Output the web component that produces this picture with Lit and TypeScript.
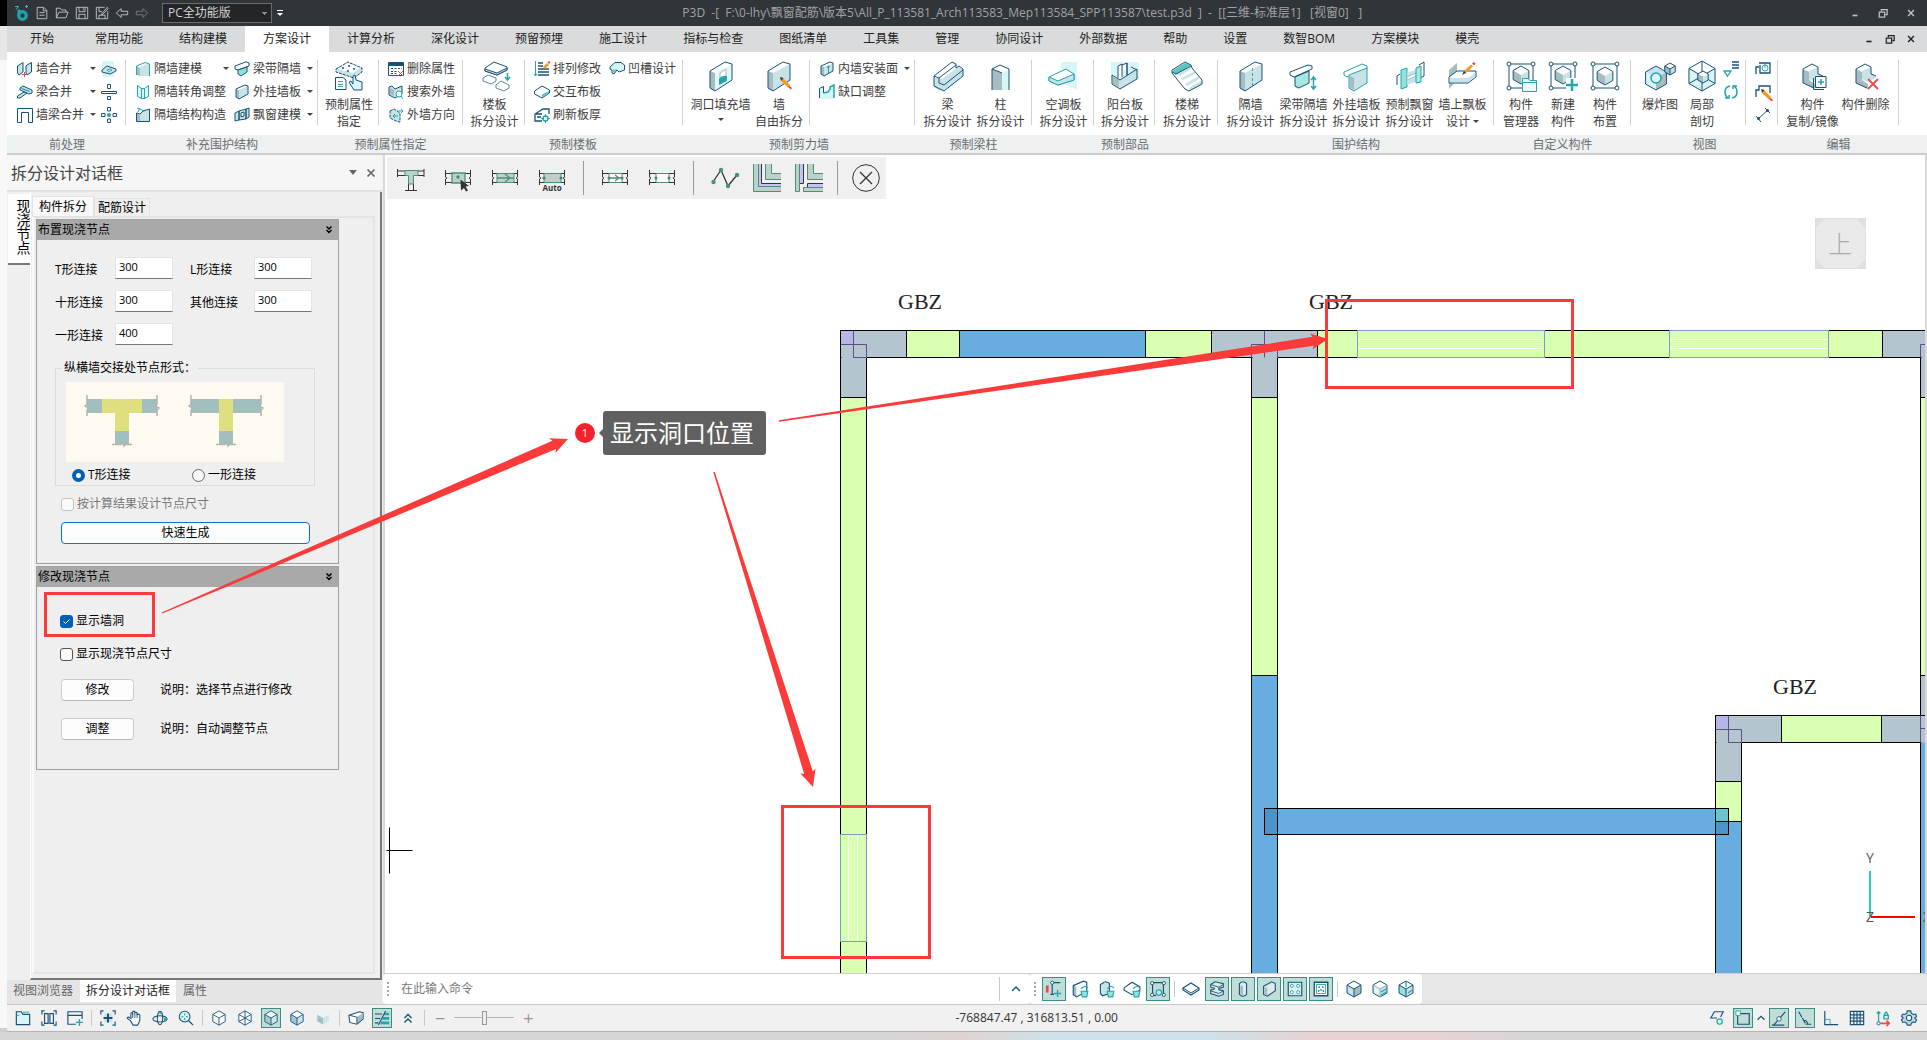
import { LitElement, html, svg, css, nothing } from "lit";
import { customElement, property, state } from "lit/decorators.js";
import { classMap } from "lit/directives/class-map.js";
import { styleMap } from "lit/directives/style-map.js";

const NAVY = "#1a5276";
const TEAL = "#26a5ad";
const PALE = "#d8f5f7";
const LIGHT = "#c8e3e8";
const GREY = "#a6bcc2";

/* ---------- drawing helpers ---------- */

const cube = (cx: number, cy: number, r: number, top = "#fff", left = GREY, right = LIGHT, line = NAVY) => {
  const w = r * 0.87;
  const h = r / 2;
  return svg`
    <path fill=${top} d="M${cx} ${cy - r}L${cx + w} ${cy - h}L${cx} ${cy}L${cx - w} ${cy - h}Z"/>
    <path fill=${left} d="M${cx - w} ${cy - h}L${cx} ${cy}V${cy + r}L${cx - w} ${cy + h}Z"/>
    <path fill=${right} d="M${cx + w} ${cy - h}L${cx} ${cy}V${cy + r}L${cx + w} ${cy + h}Z"/>
    <path fill="none" stroke=${line} d="M${cx} ${cy - r}L${cx + w} ${cy - h}V${cy + h}L${cx} ${cy + r}L${cx - w} ${cy + h}V${cy - h}Z"/>`;
};
const cubeLines = (cx: number, cy: number, r: number, line = NAVY) => {
  const w = r * 0.87;
  const h = r / 2;
  return svg`<path fill="none" stroke=${line} d="M${cx - w} ${cy - h}L${cx} ${cy}L${cx + w} ${cy - h}M${cx} ${cy}V${cy + r}"/>`;
};
const wallPanel = (front = LIGHT, line = NAVY) => svg`
  <path fill="#fff" d="M5 11L20 2L27 4L10 13Z"/>
  <path fill=${front} d="M10 13L27 4V20L10 31Z"/>
  <path fill=${GREY} d="M5 11L10 13V31L5 28Z"/>
  <path fill="none" stroke=${line} d="M5 11L20 2L27 4V20L10 31L5 28Z"/>`;
const miniWall = (front = LIGHT, line = NAVY) => svg`
  <path fill=${GREY} d="M2 5L5 6V15L2 13Z"/><path fill=${front} d="M5 6L14 2V10L5 15Z"/>
  <path fill="none" stroke=${line} d="M2 5L11 1L14 2V10L5 15L2 13Z"/>`;
const pencil = (x: number, y: number) => svg`
  <g transform="translate(${x} ${y})"><path fill="#f59b1c" d="M3 1L10 8L8 10.500L1 4Z"/><path fill="#3a3a3a" d="M0 0L3.500 1L1 4Z"/><path fill="#e8484a" d="M9 8.500L12 11L11 12.500L8 10Z"/></g>`;
const pencilUp = (x: number, y: number) => svg`
  <g transform="translate(${x} ${y})"><path fill="#f59b1c" d="M2 8L9 1.500L11 3.500L4 10Z"/><path fill="#3a3a3a" d="M0 12L2 8L4 10Z"/><path fill="#e8484a" d="M10 0.500L12 -1L13.500 0.500L12 2.500Z"/></g>`;
const nodeFrame = svg`
  <path fill="none" stroke=${NAVY} d="M4 5V27M28 5V27M4 4H28M4 28H28"/>
  <g fill="#fff" stroke=${NAVY}><circle cx="4" cy="4" r="2"/><circle cx="28" cy="4" r="2"/><circle cx="4" cy="28" r="2"/><circle cx="28" cy="28" r="2"/></g>`;
const bucket = svg`<path fill="#8fe3dc" stroke=${TEAL} d="M9 10H15L14 15H10Z"/><path fill="none" stroke=${TEAL} d="M9 8Q12 4 15 7"/>`;
const wallEnds = svg`<path fill="none" stroke="#333" d="M1.500 6V13L3 14L1.500 15V21M1.500 9.500H27M1.500 18.500H27M26.500 6V13L25 14L26.500 15V21"/>`;

/* ---------- icons: [view box size, artwork] ---------- */

const ICONS: Record<string, [number, unknown]> = {
  logo: [16, svg`<circle cx="8.500" cy="10.500" r="3.800" fill="none" stroke="#1fa3b3" stroke-width="3.200"/><path stroke="#27c0cf" fill="none" d="M1 1.500H4.500L2 4.500M12.500 0V3M11 1.500H14"/><path fill="#1fa3b3" d="M3.500 4.500H6.500V9L3.500 10Z"/>`],
  file: [16, svg`<path fill="none" stroke="#c6cacc" d="M2.500 1.500H10L13.500 5V14.500H2.500ZM9.500 1.500V5.500H13.500M5 7.500H11M5 10.500H11"/>`],
  open: [16, svg`<path fill="none" stroke="#c6cacc" d="M1.500 13.500V2.500H6L7.500 4.500H12.500V7M1.500 13.500L4.500 7H15L12.500 13.500Z"/>`],
  save: [16, svg`<path fill="none" stroke="#c6cacc" d="M1.500 1.500H14.500V14.500H1.500ZM4.500 1.500V6.500H11.500V1.500M4.500 14.500V9.500H11.500V14.500M9.500 3V5"/>`],
  saveas: [16, svg`<path fill="none" stroke="#c6cacc" d="M11 1.500H1.500V14.500H14.500V6M4.500 1.500V6.500H8M4.500 14.500V10.500H11.500V14.500M14 1.500L8 8.500L7.500 10L9 9.500L15 3Z"/>`],
  undo: [16, svg`<path fill="none" stroke="#c6cacc" d="M1.500 8L7 3V6H14.500V10H7V13Z"/>`],
  redo: [16, svg`<path fill="none" stroke="#7b8185" d="M14.500 8L9 3V6H1.500V10H9V13Z"/>`],
  more: [8, svg`<path d="M1 1H7V2H1Z" fill="#fff"/><path d="M1 4H7L4 7Z" fill="#fff"/>`],
  min: [12, svg`<path d="M3 9H9" stroke="currentColor" stroke-width="2"/>`],
  restore: [12, svg`<path fill="none" stroke="currentColor" stroke-width="1.500" d="M4 4V2H11V8H9M1.500 5H8V11H1.500Z"/>`],
  close: [12, svg`<path stroke="currentColor" stroke-width="1.700" d="M2.500 2.500L9.500 9.500M9.500 2.500L2.500 9.500"/>`],

  wallMerge: [16, svg`<path fill=${LIGHT} stroke=${NAVY} d="M2 4L6 1.500V11L2 14L.5 12V5ZM10 4L14.500 1.500V11L10 14L9 12V5Z"/><path stroke="#e8484a" d="M7.500 11V16M5 13.500H10"/>`],
  beamMerge: [16, svg`<path fill=${LIGHT} stroke=${NAVY} d="M3 4L6 2L15 6V9L12 10L3 6ZM7 8L10 9L3 14H.5V12Z"/><path fill=${TEAL} d="M5 4L13 7L12 8L4 5Z"/>`],
  wallBeam: [16, svg`<path fill="none" stroke=${NAVY} d="M.5 1.500H15.500V15.500H11.500V5.500H4.500V15.500H.5Z"/>`],
  split1: [16, svg`<path fill=${PALE} d="M1 0H13V16H1Z"/><path fill=${LIGHT} stroke=${NAVY} d="M1 9L6 5L15 8V10L9 13L1 11Z"/><path fill="#fff" stroke=${TEAL} d="M6 9L9 8L11 9L8 10.500Z"/>`],
  split2: [16, svg`<path fill="#fff" stroke=${NAVY} d="M.5 7.500H15.500V9.500H.5ZM6.500 .5H9.500V4.500H6.500ZM6.500 12.500H9.500V15.500H6.500Z"/>`],
  split3: [16, svg`<path fill="#fff" stroke=${NAVY} d="M6.500 .5H9.500V4H6.500ZM6.500 12H9.500V15.500H6.500ZM.5 6.500H4V9.500H.5ZM12 6.500H15.500V9.500H12Z"/><circle cx="8" cy="8" r="2" fill=${TEAL}/>`],
  part1: [16, svg`<path fill=${GREY} d="M2 5L5 7V15L2 14Z"/><path fill=${LIGHT} d="M5 6L14 2V15H5Z"/><path fill="none" stroke=${TEAL} d="M1.500 14V5L10 1.500L14.500 3V15"/>`],
  part2: [16, svg`<path fill=${PALE} stroke=${TEAL} d="M2.500 1.500L6.500 4.500V14.500L2.500 12.500ZM6.500 4.500H9.500V14.500H6.500M9.500 4.500L13.500 1.500V12.500L9.500 14.500Z"/>`],
  part3: [16, svg`<path fill=${LIGHT} stroke=${NAVY} d="M1.500 14.500V6L5 7L8 4L14.500 2V14.500Z"/><path stroke=${TEAL} fill="none" d="M2 1L9 4M5 1L3 5"/><path fill=${GREY} d="M2 7L5 8V14H2Z"/>`],
  part4: [16, svg`<path fill="#fff" stroke=${NAVY} d="M1 5L12 .8L15 2V5L4 9L1 8Z"/><path fill="#8fe3dc" stroke=${NAVY} d="M4 9L13 6V11L7 15L4 13Z"/>`],
  part5: [16, miniWall()],
  part6: [16, svg`<path fill=${LIGHT} stroke=${NAVY} d="M1 6L5 4V13L1 14ZM5 4L12 2V12L5 13ZM12 2L15 1V10L12 12Z"/><path fill="#fff" stroke=${NAVY} d="M7 6L10 5V9L7 10Z"/>`],
  attr: [32, svg`<path fill=${LIGHT} stroke=${NAVY} stroke-dasharray="3 1" d="M3 9L15 2L29 8V12L21 18L3 12Z"/><path fill="#fff" d="M5 9L15 3L27 8L20 13Z"/><g fill=${NAVY}><circle cx="10" cy="8" r="1"/><circle cx="16" cy="6" r="1"/><circle cx="15" cy="11" r="1"/><circle cx="21" cy="9" r="1"/></g><path fill="#fff" stroke=${NAVY} d="M2.500 17.500H10L13 20V29.500H2.500Z"/><path stroke=${TEAL} d="M5 21.500H10M5 24.500H10M5 26.500H10"/><path fill=${PALE} stroke=${NAVY} d="M19 27L16 22L18 21L20 24V16L22 15L23 20L29 22V30H21Z"/>`],
  attrDel: [16, svg`<path fill="#fff" stroke=${NAVY} d="M.5 1.500H15.500V14.500H.5Z"/><path fill=${NAVY} d="M1 2H15V5H1Z"/><path stroke=${NAVY} stroke-dasharray="2 1.500" d="M3 7.500H14M3 10.500H9M3 12.500H9"/><path stroke="#e8484a" d="M10 10L15 15M15 10L10 15"/>`],
  attrFind: [16, svg`<path fill=${LIGHT} stroke=${NAVY} d="M1 3L4 2L7 5L14 2V10L7 14L1 11Z"/><path fill=${GREY} d="M2 4L6 6V12L2 10Z"/><circle cx="11" cy="10" r="3" fill="#fff" stroke=${TEAL}/><path stroke=${TEAL} d="M13 12L15 15"/>`],
  attrDir: [16, svg`<path fill=${LIGHT} stroke=${NAVY} stroke-dasharray="3 1" d="M2 4L6 2L12 6V15L8 14L2 11Z"/><path fill="none" stroke=${TEAL} d="M9 4H15M13 2L15 4L13 6M10 9H5M7 7L5 9L7 11"/>`],
  slab: [32, svg`<path fill="#fff" stroke=${NAVY} d="M6 8L15 2L28 7V10L18 15L6 11Z"/><path fill=${LIGHT} stroke=${NAVY} d="M6 9L18 13L28 8V10L18 15L6 11Z"/><path fill="#fff" stroke=${NAVY} stroke-opacity=".7" d="M4 18L9 15L17 18V21L12 24L4 21ZM17 25L22 21L30 25V28L25 31L17 28Z"/><path stroke=${TEAL} fill="none" stroke-width="1.500" d="M28.500 13V20M26 17L28.500 20L31 17"/>`],
  arrange: [16, svg`<path stroke=${NAVY} stroke-width="1.500" d="M4 2H9M4 5H9M4 8H15M4 11H15M4 14H15"/><path fill="none" stroke=${TEAL} d="M1.500 0V15M0 13L1.500 15L3 13"/><path fill="#f59b1c" d="M9 6L13 2L15 4L11 8Z"/><path fill="#e8484a" d="M13.500 1L15 0L16.500 1.500L15 3Z"/>`],
  interact: [16, svg`<path fill="#fff" stroke=${NAVY} d="M.5 7L8 2L15.500 6V9L8 14L.5 10Z"/><path fill="#5cc4bf" d="M8 10.500L15 7V9L8 13.500Z"/>`],
  refresh: [16, svg`<path fill="none" stroke=${NAVY} stroke-width="1.300" d="M8 14H1V7L9 2H15V7M2 7H8M3 10H7"/><circle cx="11.500" cy="11.500" r="2.500" fill="none" stroke=${TEAL} stroke-width="1.500"/><path stroke=${TEAL} d="M11.500 7V16M7 11.500H16"/><circle cx="11.500" cy="11.500" r="1.500" fill="#fff"/>`],
  groove: [16, svg`<path fill=${PALE} stroke=${NAVY} d="M1 6L6 1.500H12L15.500 4V9L10 11L8 9L5 13L3 12V9L1 8Z"/><path fill=${TEAL} opacity=".6" d="M3 9L8 8L5 12Z"/>`],
  opening: [32, svg`${wallPanel("#e2f7f8")}<path fill="#fff" stroke=${GREY} d="M15 13L21 9V20L15 24Z"/><path fill=${TEAL} d="M14 19Q17 15 22 16V21L14 25Z"/>`],
  freeSplit: [32, svg`${wallPanel()}${pencil(17, 17)}`],
  inner: [16, svg`${miniWall()}<path fill="none" stroke=${TEAL} d="M9.500 12V5M8 7L9.500 5L11 6"/>`],
  notch: [16, svg`<path fill=${PALE} d="M1 4L5 2V9L11 7V2L15 1V15H1Z"/><path fill="none" stroke=${NAVY} d="M.5 14V4.500L4.500 2.500V9"/><path fill="none" stroke=${TEAL} stroke-width="1.500" d="M4.500 9L9 8L11 5V3L15 1V14"/>`],
  beam: [32, svg`<path fill=${LIGHT} d="M7 18L10 19V27L7 31L2 27V17Z"/><path fill="#fff" d="M2 16L20 2L24 4L7 18Z"/><path fill=${LIGHT} d="M10 19L26 7L31 9V16L14 29L8 31Z"/><path fill="none" stroke=${NAVY} d="M2 16L20 2L24 4V8L27 6L31 9V16L12 31L2 26ZM2 16L7 18V23L12 25L31 10M7 18L24 5"/>`],
  column: [32, svg`<path fill="#fff" d="M7 9L15 5L24 9L15 12Z"/><path fill=${GREY} d="M7 9L17 13V30H7Z"/><path fill=${PALE} d="M17 13L24 9V30H17Z"/><path fill="none" stroke=${NAVY} d="M7 30V9L15 5L24 9V30M7 9L17 13"/>`],
  acSlab: [32, svg`<path fill=${PALE} d="M13 2H29V30L13 22Z"/><path fill="#fff" stroke=${TEAL} d="M1 17L18 9L26 14V20L10 25L1 21Z"/><path fill=${LIGHT} stroke=${TEAL} d="M1 17L10 21L26 14V20L10 25L1 21Z"/>`],
  balcony: [32, svg`<path fill=${PALE} d="M2 2H30V20H2Z"/><path fill="#fff" stroke=${NAVY} d="M9 18V6L13 4V17M13 5L18 3V15M18 3V16"/><path fill=${LIGHT} stroke=${NAVY} d="M3 15L11 20L28 9V19L11 29L3 24Z"/><path fill=${GREY} d="M4 16L10 20V28L4 24Z"/><path fill="none" stroke=${NAVY} d="M22 7L28 10"/>`],
  stairs: [32, svg`<path fill="#5cc4bf" d="M1 11L14 3L20 5L5 15Z"/><path fill="#fff" d="M5 15L21 7L31 20V24L16 30Z"/><path fill=${LIGHT} d="M5 14L20 6V9L9 16ZM9 19L24 11V14L12 20ZM14 24L28 16V19L16 26ZM18 28L31 20V24L19 31Z"/><path fill="none" stroke=${NAVY} d="M1 10L14 2L20 5L21 8L31 20V24L18 31L14 29L1 13ZM1 12L5 14L20 6"/>`],
  partition: [32, svg`${wallPanel()}<path stroke=${TEAL} stroke-dasharray="3 2" d="M17.500 8V28"/>`],
  beamPart: [32, svg`<path fill="#fff" stroke=${NAVY} d="M2 12L20 5L24 6V9L6 17L2 15Z"/><path fill=${GREY} d="M7 17L10 18V29L7 26Z"/><path fill="#a8e6e2" stroke=${NAVY} d="M7 17L21 11V23L11 28L7 26Z"/><path stroke=${TEAL} fill="none" stroke-width="1.500" d="M25.500 17V29M23 20L25.500 17L28 20M23 26L25.500 29L28 26"/>`],
  hangPanel: [32, svg`<path fill="#fff" stroke=${TEAL} d="M3 12L21 4L26 6V9L6 17L3 15Z"/><path fill=${LIGHT} stroke=${TEAL} d="M8 15L26 8V23L13 31L8 28Z"/><path fill=${GREY} d="M9 16L13 18V30L9 27Z"/>`],
  bayWindow: [32, svg`<path fill="none" stroke=${NAVY} d="M3 25V16L6 14M25 5L30 2V16L26 18"/><path fill="#8fe3dc" stroke=${TEAL} d="M7 10L13 8V27L7 29Z"/><path fill=${LIGHT} d="M13 13L23 9V21L13 25Z"/><path fill="#fff" stroke=${GREY} d="M13 17L22 13V16L13 20Z"/><path fill="#a8e6e2" stroke=${TEAL} d="M22 8L27 6V22L22 23Z"/>`],
  overSlab: [32, svg`<path fill=${GREY} d="M2 10L10 3V20L2 29Z"/><path fill="#fff" stroke=${NAVY} d="M2 17L10 11H29V17L21 23H2Z"/><path fill=${LIGHT} d="M3 18H21L28 13V17L21 22H3Z"/>${pencilUp(15, 3)}`],
  manager: [32, svg`${nodeFrame}${cube(16, 15, 9)}<path fill="#e9fbfc" stroke=${TEAL} d="M17.500 18.500H23L25 20.500H31.500V31.500H17.500Z"/><path stroke=${TEAL} d="M17.500 22.500H31"/>`],
  create: [32, svg`${nodeFrame}${cube(16, 15, 9)}<path fill="#fff" d="M19 18H31V31H19Z"/><path stroke=${TEAL} stroke-width="2.500" d="M25 19V31M19 25H31"/>`],
  place: [32, svg`${nodeFrame}${cube(16, 16, 9)}`],
  explode: [32, svg`${cube(12, 18, 12, LIGHT, PALE, GREY)}<circle cx="12" cy="18" r="5" fill=${PALE} stroke=${TEAL} stroke-width="1.500"/>${cube(26, 9, 6)}${cubeLines(26, 9, 6)}`],
  section: [32, svg`${cube(16, 16, 15, "#fff", PALE, PALE)}<path stroke=${NAVY} fill="none" d="M3 8.500L16 16L29 8.500M16 16V31M3 23.500L16 16L29 23.500M16 1V16"/>${cube(17, 17, 6)}`],
  filter: [16, svg`<path stroke=${NAVY} stroke-width="1.500" d="M9 1H16M9 4H16M9 7H16"/><path fill="none" stroke=${TEAL} stroke-width="1.300" d="M1 10H8L4.500 15Z"/>`],
  sync: [16, svg`<path fill="none" stroke=${TEAL} stroke-width="1.500" d="M7 2Q2 3 2 8Q2 12 5 14M2 14H6V11M9 14Q14 13 14 8Q14 4 11 2M14 2H10V5"/>`],
  view1: [16, svg`<path fill="#fff" stroke=${NAVY} stroke-width="1.300" d="M4 2H15V12H5V4M1 13V6H4"/><circle cx="10" cy="7" r="3" fill="none" stroke=${TEAL}/><path stroke=${TEAL} d="M10 3V7"/>`],
  view2: [16, svg`<path fill="none" stroke=${NAVY} stroke-width="1.300" d="M1 13V6H4V2H15V9"/>${pencil(6, 5)}`],
  view3: [16, svg`<path fill="none" stroke=${NAVY} d="M3 12L13 3M1 9L6 15M10 1L15 6"/><circle cx="3.500" cy="11.500" r="1.500" fill=${NAVY}/><circle cx="12.500" cy="3.500" r="1.500" fill=${NAVY}/>`],
  copy: [32, svg`<path fill="#fff" d="M6 9L15 4L21 7V13L27 18V24L15 28L6 23Z"/><path fill=${GREY} d="M6 9L12 12V20L18 24V29L6 23Z"/><path fill=${LIGHT} d="M12 11L21 7V14L27 17L18 22L12 19Z"/><path fill="none" stroke=${NAVY} d="M17 28L6 23V9L15 4L21 7V14L26 16"/><path fill="#fff" stroke=${NAVY} d="M18.500 16.500H29V27.500H18.500Z"/><path stroke=${TEAL} d="M24 19V25M21 22H27" stroke-width="1.500"/><path fill="none" stroke=${NAVY} d="M16.500 18V29.500H27"/>`],
  remove: [32, svg`<path fill="#fff" d="M6 9L15 4L21 7V13L27 18V24L15 28L6 23Z"/><path fill=${GREY} d="M6 9L12 12V20L18 24V29L6 23Z"/><path fill=${LIGHT} d="M12 11L21 7V14L27 17L18 22L12 19Z"/><path fill="none" stroke=${NAVY} d="M17 28L6 23V9L15 4L21 7V14L26 16"/><path stroke="#f0484a" stroke-width="1.800" d="M18 19L28 29M28 19L18 29"/>`],

  tNode: [28, svg`<path fill="none" stroke="#333" d="M.5 5V13M27 5V13M1 7H27M1 11.500H9M19 11.500H27M8 26.500H20M11.500 20V27M16.500 20V27"/><path fill="#bcd1c9" stroke="#4d8f79" d="M8 6.500H21V11.500H16.500V20H11.500V11.500H8Z"/>`],
  pickNode: [28, svg`${wallEnds}<path fill="#bcd1c9" stroke="#4d8f79" stroke-width="1.300" d="M8 9H21V19H8Z"/><circle cx="14" cy="13" r="1.700" fill="#3f8b72"/><path fill="#333" d="M16.500 15.500L25 22L21.500 22.500L24 26.500L22 27.500L20 24L17 26.500Z"/>`],
  spanNode: [28, svg`${wallEnds}<path fill="#bcd1c9" stroke="#4d8f79" d="M6 9.500H23V18.500H6Z"/><path fill="none" stroke="#4d8f79" stroke-width="1.300" d="M6 14H23M14 10L19 14L14 18"/>`],
  autoNode: [28, svg`${wallEnds}<path fill="#bcd1c9" stroke="#4d8f79" d="M6 9.500H23V18.500H6Z"/><circle cx="6" cy="14" r="1.600" fill="#3f8b72"/><circle cx="23" cy="14" r="1.600" fill="#3f8b72"/><text x="14" y="27" text-anchor="middle" font-size="8" font-weight="700" font-family="Open Sans, sans-serif" fill="#333">Auto</text>`],
  moveSpan: [28, svg`${wallEnds}<path fill="#fff" stroke="#4d8f79" d="M8 9.500H21V18.500H8Z"/><path fill="none" stroke="#4d8f79" stroke-width="1.300" d="M8 14H21M14 11L18 14L14 17"/><circle cx="8" cy="14" r="1.500" fill="#3f8b72"/><circle cx="21" cy="14" r="1.500" fill="#3f8b72"/>`],
  emptySpan: [28, svg`${wallEnds}<path fill="#fff" stroke="#4d8f79" d="M8 9.500H21V18.500H8Z"/><circle cx="8" cy="14" r="1.500" fill="#3f8b72"/><circle cx="21" cy="14" r="1.500" fill="#3f8b72"/>`],
  polyline: [28, svg`<path fill="none" stroke="#333" stroke-width="1.300" d="M2 18L10 6L17 22L26 11"/><g fill="#4d8f79"><circle cx="2.500" cy="18" r="2.200"/><circle cx="10" cy="6" r="2.200"/><circle cx="17" cy="22" r="2.200"/><circle cx="26" cy="11" r="2.200"/></g>`],
  corner1: [28, svg`<path fill="#bcd1c9" d="M0 0H5V22H28V28H0ZM12 0H18V10H28V16H12Z"/><path fill="#c5c3f5" d="M6 0H8V19H28V22H6Z"/><path fill="none" stroke="#4d8f79" d="M.5 0V27.500H28M5.500 0V22.500H28M12.500 0V15.500H28M18.500 0V9.500H28"/><path fill="none" stroke="#333" d="M8.500 0V19.500H28"/>`],
  corner2: [28, svg`<path fill="#bcd1c9" d="M0 0H5V28H0ZM8 23H28V28H8ZM12 0H18V10H28V16H12Z"/><path fill="#c5c3f5" d="M5 0H8V19H5ZM12 20H28V23H12Z"/><path fill="none" stroke="#4d8f79" d="M.5 0V27.500H4.500V0M28 23.500H8.500V27.500H28M12.500 0V15.500H28M18.500 0V9.500H28"/><path fill="none" stroke="#333" d="M8.500 0V19.500H5M28 19.500H12.500V23"/>`],
  cancel: [28, svg`<circle cx="14" cy="14" r="13.300" fill="none" stroke="#333"/><path stroke="#333" stroke-width="1.300" d="M8 8L20 20M20 8L8 20"/>`],

  sFolder: [18, svg`<path fill=${PALE} stroke=${NAVY} stroke-width="1.300" d="M1.500 16.500V2H7L9 5H16.500V16.500Z"/><path stroke=${TEAL} d="M9 2.500H16M2 6H5"/>`],
  sCols: [18, svg`<path fill="none" stroke=${NAVY} stroke-width="1.300" d="M4 1H1V5M14 1H17V5M1 13V17H4M17 13V17H14M4 4H8V15H4ZM10 4H14V15H10Z"/>`],
  sWin: [18, svg`<path fill="none" stroke=${NAVY} stroke-width="1.300" d="M10 16H1V2H17V10M1 6H17"/><path stroke=${TEAL} stroke-width="1.500" d="M14 10V18M10 14H18"/>`],
  sFit: [18, svg`<path fill=${LIGHT} d="M5 4H14V14H5Z"/><path fill="none" stroke=${NAVY} stroke-width="1.300" d="M4 1H1V5M14 1H17V5M1 13V17H4M17 13V17H14"/><path stroke=${NAVY} stroke-width="2.200" d="M9 4V14M4 9H14"/>`],
  sPan: [18, svg`<path fill="#fff" stroke=${NAVY} stroke-width="1.200" d="M5 12L1.500 9.500Q1 8 3 8L5.500 9.500V4Q6.500 2.500 7.500 4V2Q8.800 .5 10 2V3Q11.500 2 12.500 3.500V5Q14 4 15.500 5.500V12L13 17H8Z"/><path stroke=${NAVY} d="M7.500 4V9M10 3V9M12.500 4V9"/>`],
  sOrbit: [18, svg`<ellipse cx="9" cy="10" rx="8" ry="3.500" fill="none" stroke=${NAVY} stroke-width="1.200"/><ellipse cx="9" cy="9" rx="3" ry="7.500" fill="none" stroke=${NAVY} stroke-width="1.200"/><path fill=${TEAL} d="M7 3L11 1V5ZM13 8L17 10L14 13Z"/>`],
  sZoom: [18, svg`<circle cx="7.500" cy="7.500" r="6" fill=${PALE} stroke=${NAVY} stroke-width="1.200"/><path stroke=${NAVY} stroke-width="1.500" d="M12 12L17 17"/><path stroke=${TEAL} stroke-width="1.500" d="M7.500 4V6M7.500 9V11M4 7.500H6M9 7.500H11"/>`],
  sBox1: [18, svg`${cube(9, 9, 8, "#fff", "#fff", "#fff")}${cubeLines(9, 9, 8)}`],
  sBox2: [18, svg`${cube(9, 9, 8, "#fff", "#fff", "#fff")}${cubeLines(9, 9, 8)}<path fill="none" stroke=${NAVY} d="M9 1V9M2 13L9 9L16 13"/>`],
  sBox3: [18, svg`${cube(9, 9, 8, "#f4fbfb", "#a9ccc8", "#cfe6e3")}${cubeLines(9, 9, 8)}`],
  sBox4: [18, svg`${cube(9, 9, 8, "#fff", "#a5c8d4", LIGHT)}${cubeLines(9, 9, 8)}`],
  sBox5: [18, svg`${cube(9, 9, 8, "#e6f5f5", "#a3c1c3", "#cfe5e5", "#eaf4f4")}`],
  sFlat: [18, svg`<path fill="#fff" stroke=${NAVY} stroke-width="1.200" d="M1 6L13 2L17 3V10L10 16L2 14Z"/><path fill=${GREY} d="M10 8L16 4V10L10 15Z"/><path fill="none" stroke=${NAVY} d="M2 6L10 8V15"/>`],
  sDetail: [18, svg`<path fill=${TEAL} d="M12 3H17V6H11ZM10 8H17V11H9ZM8 13H17V16H7Z"/><path stroke=${NAVY} stroke-width="1.200" d="M1 4.500H9M1 9.500H7M1 14.500H5M5 17L13 1"/>`],
  sUp: [18, svg`<path fill="none" stroke=${NAVY} stroke-width="1.600" d="M5 9L9 5L13 9M5 14L9 10L13 14"/>`],
  cUp: [16, svg`<path fill="none" stroke=${NAVY} stroke-width="1.400" d="M4 10L8 6L12 10"/>`],

  cAxis: [20, svg`<path fill="#f0484a" d="M1 6H4V14H1Z"/><path fill="none" stroke=${NAVY} stroke-width="1.300" d="M8 3V16M8 3H17M6 16H10"/><circle cx="8" cy="3" r="1.800" fill="#fff" stroke=${NAVY}/><path stroke=${TEAL} stroke-width="1.500" d="M14 11V19M10 15H18"/>`],
  cPaint1: [16, svg`${miniWall("#f4fcfc")}${bucket}`],
  cPaint2: [16, svg`<path fill=${LIGHT} stroke=${NAVY} d="M5 3Q7 0 11 3V12L5 14L3 12V4Z"/>${bucket}`],
  cPaint3: [16, svg`<path fill="#fff" stroke=${NAVY} d="M1 7L8 2L15 6V9L8 13L1 9Z"/>${bucket}`],
  cFrame: [20, svg`<path fill="none" stroke=${NAVY} stroke-width="1.300" d="M4 4V16M16 4V16M4 3H16M4 17H8"/><g fill="#fff" stroke=${NAVY}><circle cx="3.500" cy="3.500" r="1.800"/><circle cx="16.500" cy="3.500" r="1.800"/><circle cx="3.500" cy="16.500" r="1.800"/><circle cx="16.500" cy="16.500" r="1.800"/></g><circle cx="11" cy="14" r="3" fill="#c3ece9" stroke=${TEAL} stroke-width="1.300"/>`],
  cSlab: [18, svg`<path fill="#fff" stroke=${NAVY} stroke-width="1.200" d="M1 8L9 3L17 8V10L9 15L1 10Z"/><path fill="none" stroke=${NAVY} d="M1 8L9 13L17 8"/>`],
  cBeam: [20, svg`<path fill="#dcebec" stroke=${NAVY} stroke-width="1.200" d="M3 5L8 2L17 4V8L12 9V11L17 12V16L12 18L3 15V11L7 10V9L3 8Z"/><path fill="none" stroke=${NAVY} d="M3 5L12 8L17 5M3 12L12 15L17 12"/>`],
  cCol: [20, svg`<path fill="#dcebec" stroke=${NAVY} stroke-width="1.200" d="M6 4Q10 0 14 4V16Q10 20 6 16Z"/><path fill=${GREY} d="M7 6L10 7V17L7 15Z"/>`],
  cWall: [20, svg`<path fill="#dcebec" stroke=${NAVY} stroke-width="1.200" d="M4 7L13 2L17 4V12L8 18L4 16Z"/><path fill=${GREY} d="M5 8L8 9V17L5 15Z"/>`],
  cDots: [20, svg`<path fill="#d9eeee" stroke=${NAVY} stroke-width="1.300" d="M2.500 2.500H17.500V17.500H2.500Z"/><g fill="#fff" stroke=${TEAL}><circle cx="6.500" cy="6.500" r="1.700"/><circle cx="13.500" cy="6.500" r="1.700"/><circle cx="6.500" cy="13.500" r="1.700"/><circle cx="13.500" cy="13.500" r="1.700"/></g>`],
  cSocket: [20, svg`<path fill="#fff" stroke=${NAVY} stroke-width="1.500" d="M2.500 2.500H17.500V17.500H2.500Z"/><path fill="none" stroke=${TEAL} d="M5 5H15V15H5Z"/><path stroke=${NAVY} stroke-width="1.200" d="M8 7V9M12 7V9M10 10V12M7 13L8 11M13 13L12 11"/>`],
  cBox1: [18, svg`${cube(9, 9, 8, "#fff", LIGHT, GREY)}${cubeLines(9, 9, 8)}`],
  cBox2: [18, svg`${cube(9, 9, 8, "#fff", "#eaf4f6", LIGHT)}${cubeLines(9, 9, 8, "#8fb0bb")}<path stroke=${TEAL} stroke-width="1.300" d="M10 12L15 9M10 15L15 12"/>`],
  cBox3: [18, svg`${cube(9, 9, 8, "#fff", "#8fe3dc", LIGHT)}${cubeLines(9, 9, 8)}<path stroke=${TEAL} stroke-width="1.300" d="M9 2V7M11 13L15 10"/>`],

  rPoly: [18, svg`<path fill="none" stroke=${NAVY} stroke-width="1.300" d="M9 9H2L6 2H16L13 8"/><circle cx="12" cy="13" r="3" fill="#d8f5f7" stroke=${TEAL} stroke-width="1.300"/>`],
  rRect: [18, svg`<path fill="none" stroke=${NAVY} stroke-width="1.300" d="M3 4V16H16V4Z"/><path fill="#fff" stroke=${TEAL} d="M1 1H6V6H1Z"/>`],
  rNear: [18, svg`<path fill="none" stroke=${NAVY} stroke-width="1.300" d="M1 17H15M3 17L16 2"/><circle cx="9" cy="10" r="2.500" fill="#fff" stroke=${NAVY}/>`],
  rAngle: [18, svg`<path fill="none" stroke=${NAVY} stroke-width="1.300" d="M2 2L10 16H16M8 12Q11 11 12 16" stroke-dasharray="7 1"/>`],
  rOrtho: [18, svg`<path fill="none" stroke=${NAVY} stroke-width="1.300" d="M2 1V16.500H17"/><path fill="none" stroke=${TEAL} d="M2 10.500H8V16"/>`],
  rGrid: [18, svg`<path fill="none" stroke=${NAVY} stroke-width="1.300" d="M1.500 1.500H16.500V16.500H1.500ZM5.500 1V17M9 1V17M12.500 1V17M1 5.500H17M1 9H17M1 12.500H17"/>`],
  rMove: [18, svg`<path fill="none" stroke=${TEAL} stroke-width="1.500" d="M4 13V2M2 4L4 2L6 4M11 6V4Q12.500 1 14 4V6M10 6H15V10H10Z"/><path fill="none" stroke="#f0484a" stroke-width="1.800" d="M6 15H16M13 12L16 15L13 18"/><circle cx="4" cy="15" r="1.800" fill="#fff" stroke=${NAVY}/>`],
  rGear: [18, svg`<path fill="#b6dde6" stroke=${NAVY} stroke-width="1.200" d="M7 1H11L11.500 3.500L14 5L16.500 4.500L17.500 7.500L15.500 9L17.500 11L16 14L13.500 13.500L11.500 15L11 17H7L6.500 15L4.500 13.500L2 14L.5 11L2.500 9L.5 7L2 4.500L4.500 5L6.500 3.500Z"/><circle cx="9" cy="9" r="3" fill="#fff" stroke=${NAVY} stroke-width="1.200"/>`],
};

@customElement("cad-icon")
class CadIcon extends LitElement {
  @property() name = "";
  static styles = css`
    :host { display: inline-flex; flex: none; width: 16px; height: 16px; }
    .art { width: 100%; height: 100%; display: block; overflow: visible; }
  `;
  render() {
    const entry = ICONS[this.name];
    if (!entry) return nothing;
    return html`<svg class="art" viewBox="0 0 ${entry[0]} ${entry[0]}" aria-hidden="true">${entry[1]}</svg>`;
  }
}

/* ---------- ribbon ---------- */

type Small = { icon: string; text?: string; caret?: boolean };
type Big = { icon: string; lines: string[]; caret?: boolean; size?: "wide" | "narrow" };
type Panel = { weight: number; bigs?: Big[]; cols?: Small[][] };
type Group = { label: string; panels: Panel[] };

const s = (icon: string, text = "", caret = false): Small => ({ icon, text, caret });
const split = "拆分设计";

const GROUPS: Group[] = [
  { label: "前处理", panels: [{ weight: 118, cols: [
    [s("wallMerge", "墙合并", true), s("beamMerge", "梁合并", true), s("wallBeam", "墙梁合并", true)],
    [s("split1"), s("split2"), s("split3")]] }] },
  { label: "补充围护结构", panels: [{ weight: 192, cols: [
    [s("part1", "隔墙建模", true), s("part2", "隔墙转角调整"), s("part3", "隔墙结构构造")],
    [s("part4", "梁带隔墙", true), s("part5", "外挂墙板", true), s("part6", "飘窗建模", true)]] }] },
  { label: "预制属性指定", panels: [
    { weight: 61, bigs: [{ icon: "attr", lines: ["预制属性", "指定"] }] },
    { weight: 84, cols: [[s("attrDel", "删除属性"), s("attrFind", "搜索外墙"), s("attrDir", "外墙方向")]] }] },
  { label: "预制楼板", panels: [
    { weight: 62, bigs: [{ icon: "slab", lines: ["楼板", split] }] },
    { weight: 158, cols: [[s("arrange", "排列修改"), s("interact", "交互布板"), s("refresh", "刷新板厚")], [s("groove", "凹槽设计")]] }] },
  { label: "预制剪力墙", panels: [
    { weight: 127, bigs: [{ icon: "opening", lines: ["洞口填充墙"], caret: true, size: "wide" }, { icon: "freeSplit", lines: ["墙", "自由拆分"] }] },
    { weight: 105, cols: [[s("inner", "内墙安装面", true), s("notch", "缺口调整")]] }] },
  { label: "预制梁柱", panels: [{ weight: 117, bigs: [{ icon: "beam", lines: ["梁", split] }, { icon: "column", lines: ["柱", split] }] }] },
  { label: "预制部品", panels: [
    { weight: 62, bigs: [{ icon: "acSlab", lines: ["空调板", split] }] },
    { weight: 61, bigs: [{ icon: "balcony", lines: ["阳台板", split] }] },
    { weight: 63, bigs: [{ icon: "stairs", lines: ["楼梯", split] }] }] },
  { label: "围护结构", panels: [{ weight: 276, bigs: [
    { icon: "partition", lines: ["隔墙", split] }, { icon: "beamPart", lines: ["梁带隔墙", split] },
    { icon: "hangPanel", lines: ["外挂墙板", split] }, { icon: "bayWindow", lines: ["预制飘窗", split] },
    { icon: "overSlab", lines: ["墙上飘板", "设计"], caret: true }] }] },
  { label: "自定义构件", panels: [{ weight: 137, bigs: [
    { icon: "manager", lines: ["构件", "管理器"], size: "narrow" }, { icon: "create", lines: ["新建", "构件"], size: "narrow" },
    { icon: "place", lines: ["构件", "布置"], size: "narrow" }] }] },
  { label: "视图", panels: [
    { weight: 115, bigs: [{ icon: "explode", lines: ["爆炸图"], size: "narrow" }, { icon: "section", lines: ["局部", "剖切"], size: "narrow" }],
      cols: [[s("filter"), s("sync")]] },
    { weight: 32, cols: [[s("view1"), s("view2"), s("view3")]] }] },
  { label: "编辑", panels: [{ weight: 121, bigs: [{ icon: "copy", lines: ["构件", "复制/镜像"] }, { icon: "remove", lines: ["构件删除"] }] }] },
];

const TABS = ["开始", "常用功能", "结构建模", "方案设计", "计算分析", "深化设计", "预留预埋", "施工设计", "指标与检查", "图纸清单",
  "工具集", "管理", "协同设计", "外部数据", "帮助", "设置", "数智BOM", "方案模块", "模壳"];

const buttonReset = css`
  * { box-sizing: border-box; }
  button { font: inherit; color: inherit; background: none; border: 0; margin: 0; padding: 0; display: inline-flex; align-items: center; justify-content: center; }
`;

@customElement("cad-ribbon")
class CadRibbon extends LitElement {
  @state() private active = "方案设计";
  static styles = [buttonReset, css`
    :host { display: block; background: #fff; color: #3c3c3c; }
    .tabs { display: flex; height: 26px; background: #d9dbdc; color: #222; }
    .tabs .tab { padding: 0 18px; white-space: nowrap; height: 26px; }
    .tabs .tab:first-child { padding: 0 23px; }
    .tabs .tab.on { background: #fff; }
    .win { margin-left: auto; display: flex; gap: 5px; align-items: center; padding-right: 8px; }
    .win button { width: 16px; height: 16px; }
    .win cad-icon { width: 10px; height: 10px; }
    .groups { display: flex; padding: 0 28px 0 1px; background: linear-gradient(#fff 83px, #edf1f2 83px); border-bottom: 2px solid #cbcdcf; }
    .group { display: flex; flex-direction: column; flex-basis: 0; min-width: 0; }
    .body { display: flex; height: 83px; padding-top: 5px; }
    .panel { display: flex; flex-basis: 0; min-width: 0; }
    .content { display: flex; flex: 1; justify-content: center; min-width: 0; padding-left: 2px; }
    .content.left { justify-content: flex-start; gap: 5px; padding-left: 9px; }
    .rule { width: 1px; height: 65px; margin-top: 3px; background: #d2d2d2; flex: none; }
    .col { display: grid; grid-auto-rows: 23px; align-content: start; }
    .small { gap: 3px; justify-content: flex-start; white-space: nowrap; }
    .caret { border: 3px solid transparent; border-top-color: #444; border-bottom-width: 0; margin-left: auto; }
    .small .lbl { padding-right: 3px; }
    .big { flex-direction: column; justify-content: flex-start; width: 53px; height: 75px; padding-top: 3px; line-height: 17px; white-space: nowrap; }
    .big.wide { width: 64px; }
    .big.narrow { width: 42px; }
    .big cad-icon { width: 32px; height: 32px; margin-bottom: 4px; }
    .line { display: flex; align-items: center; gap: 3px; min-height: 12px; }
    .name { height: 18px; line-height: 20px; text-align: center; color: #6a6e70; }
  `];
  private small(i: Small) {
    return html`<button class="small" aria-label=${i.text || i.icon}><cad-icon name=${i.icon}></cad-icon>${i.text ? html`<span class="lbl">${i.text}</span>` : nothing}${i.caret ? html`<i class="caret"></i>` : nothing}</button>`;
  }
  private big(b: Big) {
    const last = b.lines.length - 1;
    const inline = b.caret && last > 0;
    return html`<button class=${classMap({ big: true, wide: b.size === "wide", narrow: b.size === "narrow" })}>
      <cad-icon name=${b.icon}></cad-icon>
      ${b.lines.map((t, n) => html`<span class="line">${t}${inline && n === last ? html`<i class="caret"></i>` : nothing}</span>`)}
      ${b.caret && !inline ? html`<span class="line"><i class="caret"></i></span>` : nothing}
    </button>`;
  }
  render() {
    return html`
      <nav class="tabs">
        ${TABS.map((t) => html`<button class=${classMap({ tab: true, on: t === this.active })} @click=${() => (this.active = t)}>${t}</button>`)}
        <div class="win">
          <button aria-label="最小化"><cad-icon name="min"></cad-icon></button>
          <button aria-label="还原"><cad-icon name="restore"></cad-icon></button>
          <button aria-label="关闭"><cad-icon name="close"></cad-icon></button>
        </div>
      </nav>
      <div class="groups">
        ${GROUPS.map((g) => html`
          <section class="group" style=${styleMap({ flexGrow: String(g.panels.reduce((a, p) => a + p.weight, 0)) })}>
            <div class="body">
              ${g.panels.map((p) => html`
                <div class="panel" style=${styleMap({ flexGrow: String(p.weight) })}>
                  <div class=${classMap({ content: true, left: !p.bigs })}>
                    ${(p.bigs ?? []).map((b) => this.big(b))}
                    ${(p.cols ?? []).map((c) => html`<div class="col">${c.map((i) => this.small(i))}</div>`)}
                  </div>
                  <i class="rule"></i>
                </div>`)}
            </div>
            <div class="name">${g.label}</div>
          </section>`)}
      </div>`;
  }
}

/* ---------- docked dialog ---------- */

@customElement("split-dialog")
class SplitDialog extends LitElement {
  static styles = [buttonReset, css`
    :host { display: flex; flex-direction: column; background: #f6f6f6; color: #000; }
    .head { display: flex; align-items: center; height: 35px; padding: 0 2px 0 4px; font-size: 16px; color: #444; }
    .head .grow { flex: 1; }
    .head button { width: 18px; height: 18px; color: #666; }
    .head cad-icon { width: 12px; height: 12px; }
    .tri { border: 4px solid transparent; border-top: 5px solid #666; border-bottom-width: 0; }
    .main { flex: 1; display: flex; background: #efefef; border-top: 2px solid #e1e1e1; min-height: 0; }
    .side { width: 23px; padding-top: 2px; }
    .side button { width: 22px; height: 71px; margin-left: 1px; padding: 4px 0 8px 7px; background: #fdfdfd; border-bottom: 2px solid #777; font-size: 14px; line-height: 14px; writing-mode: vertical-rl; }
    .page { flex: 1; display: flex; flex-direction: column; border-right: 2px solid #777; border-bottom: 2px solid #777; border-left: 1px solid #fff; padding: 4px 5px 4px 1px; }
    .tabs { display: flex; align-items: flex-end; }
    .tabs button { height: 18px; padding: 0 3px; border: 1px solid #e2e2e2; border-bottom: 0; width: 56px; }
    .tabs button.on { height: 20px; width: 62px; background: #f9f9f9; }
    .sheet { flex: 1; border: 2px solid #e4e4e4; border-left-color: #fafafa; padding: 1px 34px 0 2px; display: flex; flex-direction: column; gap: 2px; }
    .box { border: 1px solid #a0a0a0; padding-bottom: 19px; }
    .box.last { padding-bottom: 23px; }
    .cap { display: flex; justify-content: space-between; align-items: center; height: 20px; background: #a9a9a9; padding: 0 5px 0 1px; }
    .in { padding-left: 18px; }
    .fields { display: grid; grid-template-columns: 60px 75px 64px 58px; row-gap: 11px; padding-top: 17px; align-items: center; }
    .fields label { padding-top: 4px; }
    .fields input { width: 58px; height: 22px; border: 1px solid #e4e4e4; border-bottom: 1px solid #777; background: #fff; padding: 0 3px 3px; font: inherit; font-size: 11px; }
    fieldset { margin: 14px 0 0; width: 260px; min-width: 0; padding: 0 6px; border: 1px solid #dcdcdc; }
    legend { padding: 0 2px; line-height: 18px; }
    .pic { display: block; width: 218px; height: 80px; margin: 5px 0 0 4px; background: #fffaef; }
    .radios { display: flex; height: 23px; align-items: center; padding: 3px 0 0 10px; }
    .radios label:first-child { flex: none; width: 120px; }
    .check { display: flex; align-items: center; gap: 3px; height: 18px; }
    input[type="radio"] { appearance: none; width: 13px; height: 13px; margin: 0; border: 1px solid #666; border-radius: 50%; background: #f7f7f7; }
    input[type="radio"]:checked { border: 4px solid #005fb8; background: #fff; }
    input[type="checkbox"] { appearance: none; flex: none; width: 13px; height: 13px; margin: 0; border: 1px solid #555; border-radius: 3px; background: #fafafa; }
    input[type="checkbox"]:disabled { border-color: #c4c4c4; }
    .tick { display: grid; }
    .tick > * { grid-area: 1 / 1; }
    .tick svg { pointer-events: none; }
    input[type="checkbox"]:checked { border-color: #005fb8; background: #005fb8; }
    .off { color: #777; }
    .inner { padding-left: 6px; }
    .calc { margin-top: 9px; }
    .push { background: #fdfdfd; border: 1px solid #ccc; border-bottom-color: #b5b5b5; border-radius: 4px; height: 22px; width: 73px; }
    .push.go { width: 249px; border: 1px solid #0078d4; margin-top: 9px; }
    .edit { display: grid; row-gap: 15px; padding: 25px 0 5px 23px; }
    .row { display: flex; align-items: center; gap: 26px; height: 24px; padding-left: 1px; }
    .docks { display: flex; gap: 1px; height: 24px; background: #e5e5e5; color: #666; align-items: flex-start; }
    .docks button { height: 22px; padding: 0 6px; }
    .docks .on { background: #fff; color: #222; }
  `];
  private field(id: string, label: string, value: string) {
    return html`<label for=${id}>${label}</label><input id=${id} type="text" .value=${value} />`;
  }
  private head(text: string) {
    return html`<div class="cap"><span>${text}</span><svg width="8" height="8" viewBox="0 0 8 8"><path fill="none" stroke="#000" stroke-width="1.500" d="M1.500 .5L4 3L6.500 .5M1.500 4L4 6.500L6.500 4"/></svg></div>`;
  }
  private joint(x: number, wide: boolean) {
    return svg`<g transform="translate(${x} 0)">
      <path fill="#a0bfbd" d="M0 17H70V31H0Z"/>
      <path fill="#a0bfbd" d="M28 49H42V62H28Z"/>
      <path fill="#e0df80" d=${wide ? "M15 17H55V31H42V49H28V31H15Z" : "M28 17H42V49H28Z"}/>
      <path stroke="#b3b3b3" stroke-width="1.500" fill="none" d="M0 13V22L-2 24L2 26L0 28V34M70 13V22L68 24L72 26L70 28V34M25 62.500H34L35 60L37 64L38 62.500H45"/>
    </g>`;
  }
  render() {
    return html`
      <header class="head"><span>拆分设计对话框</span><span class="grow"></span>
        <button aria-label="菜单"><i class="tri"></i></button>
        <button aria-label="关闭面板"><cad-icon name="close"></cad-icon></button></header>
      <div class="main">
        <div class="side"><button>现浇节点</button></div>
        <div class="page">
          <div class="tabs"><button class="on">构件拆分</button><button>配筋设计</button></div>
          <div class="sheet">
            <section class="box">
              ${this.head("布置现浇节点")}
              <div class="in">
                <div class="fields">
                  ${this.field("t", "T形连接", "300")}${this.field("l", "L形连接", "300")}
                  ${this.field("x", "十形连接", "300")}${this.field("o", "其他连接", "300")}
                  ${this.field("i", "一形连接", "400")}
                </div>
                <fieldset>
                  <legend>纵横墙交接处节点形式：</legend>
                  <svg class="pic" viewBox="0 0 218 80">${this.joint(21, true)}${this.joint(125, false)}</svg>
                  <div class="radios">
                    <label class="check"><input type="radio" name="joint" checked />T形连接</label>
                    <label class="check"><input type="radio" name="joint" />一形连接</label>
                  </div>
                </fieldset>
                <div class="inner">
                  <label class="check calc off"><input type="checkbox" disabled />按计算结果设计节点尺寸</label>
                  <button class="push go">快速生成</button>
                </div>
              </div>
            </section>
            <section class="box last">
              ${this.head("修改现浇节点")}
              <div class="edit">
                <label class="check"><span class="tick"><input type="checkbox" checked /><svg width="13" height="13" viewBox="0 0 13 13"><path fill="none" stroke="#fff" d="M3.500 6.500L5.500 8.500L9.500 4.500"/></svg></span>显示墙洞</label>
                <label class="check"><input type="checkbox" />显示现浇节点尺寸</label>
                <div class="row"><button class="push">修改</button><span>说明：选择节点进行修改</span></div>
                <div class="row"><button class="push">调整</button><span>说明：自动调整节点</span></div>
              </div>
            </section>
          </div>
        </div>
      </div>
      <nav class="docks"><button>视图浏览器</button><button class="on">拆分设计对话框</button><button>属性</button></nav>`;
  }
}

/* ---------- plan view ---------- */

const C = { green: "#d9ffb0", blue: "#68addf", slate: "#b4c5cf", lilac: "#b7b5e6" };
type Seg = [number, number, number, number, string];
const SEGS: Seg[] = [
  [906, 330, 53, 27, C.green], [959, 330, 186, 27, C.blue], [1145, 330, 66, 27, C.green], [1317, 330, 565, 27, C.green],
  [1211, 330, 106, 27, C.slate], [840, 330, 66, 27, C.slate], [1882, 330, 60, 27, C.slate],
  [840, 357, 26, 40, C.slate], [840, 397, 26, 600, C.green],
  [1251, 357, 26, 40, C.slate], [1251, 397, 26, 278, C.green], [1251, 675, 26, 320, C.blue],
  [1920, 357, 26, 40, C.slate], [1920, 397, 26, 278, C.green], [1920, 675, 26, 40, C.slate], [1920, 742, 26, 260, C.blue],
  [1715, 715, 66, 27, C.slate], [1781, 715, 100, 27, C.green], [1881, 715, 60, 27, C.slate],
  [1715, 742, 26, 39, C.slate], [1715, 781, 26, 40, C.green], [1715, 821, 26, 180, C.blue],
];

const TOOLS = [["tNode", "pickNode", "spanNode", "autoNode"], ["moveSpan", "emptySpan"], ["polyline", "corner1", "corner2"], ["cancel"]];

@customElement("plan-view")
class PlanView extends LitElement {
  static styles = [buttonReset, css`
    :host { display: flex; flex-direction: column; align-items: flex-start; position: relative; background: #fff; border-left: 2px solid #d8d8d8; border-right: 2px solid #d8d8d8; min-height: 0; overflow: hidden; }
    .bar { display: flex; align-items: center; height: 42px; margin: 2px 0 0 2px; padding: 0 6px 0 10px; background: #f0f0f0; position: relative; }
    .set { display: flex; gap: 19px; padding-right: 17px; margin-right: 17px; border-right: 1px solid #999; height: 34px; align-items: center; }
    .set.tight { gap: 14px; padding-right: 14px; margin-right: 14px; }
    .set:last-child { border: 0; margin: 0; padding: 0; }
    .set cad-icon, .set button { width: 28px; height: 28px; }
    .plan { position: absolute; left: 0; top: 0; width: 100%; height: 100%; }
    .gbz { font: 22px "Liberation Serif", serif; fill: #222; }
    .axis { font: 14px "Open Sans", sans-serif; fill: #555; }
    .face { font: 24px "Noto Sans CJK SC", sans-serif; fill: #aaa; font-weight: 300; }
  `];
  private hinge(x: number, y: number) {
    return svg`<rect x=${x} y=${y} width="13" height="13" fill=${C.lilac}/>
      <path fill="none" stroke="#5a4f8a" d="M${x} ${y + 14}H${x + 26}V${y + 27}M${x + 13} ${y}V${y + 27}H${x + 26}"/>`;
  }
  render() {
    return html`
      <svg class="plan" viewBox="385 155 1540 818" preserveAspectRatio="xMinYMin slice" role="img" aria-label="标准层平面">
        <g transform="translate(.5 .5)">
          ${SEGS.map(([x, y, w, h, f]) => svg`<rect x=${x} y=${y} width=${w} height=${h} fill=${f} stroke="#000"/>`)}
          <path stroke=${C.slate} d="M841 357H866M1252 357H1277M1716 742H1741M1921 357H1926M1921 742H1926"/>
          ${this.hinge(840, 330)}${this.hinge(1715, 715)}
          <path fill="none" stroke="#5a4f8a" d="M1264 330V357M1251 357V344H1277V357M1920 357V344H1926M1920 715V742M1920 728H1926"/>
          <path fill="none" stroke="#000" d="M840 344V330H854M1715 729V715H1729"/>
          ${[[1357, 187], [1669, 159]].map(([x, w]) => svg`
            <rect x=${x} y="330" width=${w} height="27" fill=${C.green} stroke="#7f9aba"/>
            <path stroke="#fff" d="M${x + 1} 339H${x + w - 1}M${x + 1} 348H${x + w - 1}"/>`)}
          <rect x="840" y="834" width="26" height="107" fill=${C.green} stroke="#7f9aba"/>
          <path stroke="#fff" d="M848 835V940M857 835V940"/>
          <rect x="1264" y="808" width="464" height="26" fill=${C.blue} stroke="#000"/>
          <rect x="1264" y="808" width="13" height="26" fill="#4b93c8" stroke="#000"/>
          <rect x="1715" y="808" width="13" height="13" fill="#6fc2cc" stroke="#000"/>
          <rect x="1715" y="821" width="13" height="13" fill="#4b93c8" stroke="#000"/>
          <path stroke="#000" d="M389 827V873M386 850H412"/>
        </g>
        <g class="gbz" text-anchor="middle"><text x="920" y="309">GBZ</text><text x="1331" y="309">GBZ</text><text x="1795" y="694">GBZ</text></g>
        <path fill="#e0e0e0" d="M1815 218H1866V269H1815Z"/>
        <path fill="#eaeaea" d="M1824 219H1857L1865 228V259L1857 268H1824L1816 259V228Z"/>
        <text class="face" x="1840" y="253" text-anchor="middle">上</text>
        <path stroke="#1fd6a8" stroke-width="2" d="M1870 871V916"/>
        <path stroke="#f00" stroke-width="2" d="M1871 917H1915"/>
        <g class="axis" text-anchor="middle"><text x="1870" y="863">Y</text><text x="1870" y="922">Z</text><text x="1927" y="922">X</text></g>
      </svg>
      <div class="bar">
        ${TOOLS.map((t, n) => html`<div class=${classMap({ set: true, tight: n === 2 })}>${t.map((i) => html`<button aria-label=${i}><cad-icon name=${i}></cad-icon></button>`)}</div>`)}
      </div>`;
  }
}

/* ---------- annotation layer ---------- */

@customElement("markup-layer")
class MarkupLayer extends LitElement {
  static styles = css`
    :host { position: absolute; inset: 0; pointer-events: none; }
    .art { width: 100%; height: 100%; display: block; }
    .tip { font: 24px "Noto Sans CJK SC", sans-serif; fill: #fff; }
    .num { font: 11px "Open Sans", sans-serif; fill: #fff; }
  `;
  private arrow(x1: number, y1: number, x2: number, y2: number) {
    const len = Math.hypot(x2 - x1, y2 - y1);
    const ux = (x2 - x1) / len;
    const uy = (y2 - y1) / len;
    const at = (along: number, off: number) => `${(x1 + ux * along - uy * off).toFixed(1)},${(y1 + uy * along + ux * off).toFixed(1)}`;
    const pts = [at(0, -0.7), at(len - 15, -4.5), at(len - 17, -8), at(len, 0), at(len - 17, 8), at(len - 15, 4.5), at(0, 0.7)];
    return svg`<polygon fill="#fb3b3a" points=${pts.join(" ")}/>`;
  }
  render() {
    return html`<svg class="art" viewBox="0 0 1927 1040" preserveAspectRatio="xMinYMin meet">
      <g fill="none" stroke="#fb3b3a" stroke-width="3">
        <rect x="45.500" y="593.500" width="108" height="42"/><rect x="1326.500" y="300.500" width="246" height="87"/><rect x="782.500" y="806.500" width="147" height="151"/>
      </g>
      ${this.arrow(162, 613, 568, 439)}${this.arrow(779, 421, 1328, 339)}${this.arrow(714, 472, 813, 787)}
      <circle cx="585" cy="433" r="10" fill="#f5222d"/><text class="num" x="585" y="437" text-anchor="middle">1</text>
      <path fill="#606060" d="M606 411H763Q766 411 766 414V452Q766 455 763 455H606Q603 455 603 452V437L599 433L603 429V414Q603 411 606 411Z"/>
      <text class="tip" x="610" y="442">显示洞口位置</text>
    </svg>`;
  }
}

/* ---------- shell ---------- */

const QUICK = ["file", "open", "save", "saveas", "undo", "redo"];
const STATUS_LEFT = ["sFolder", "sCols", "sWin", "|", "sFit", "sPan", "sOrbit", "sZoom", "|", "sBox1", "sBox2", "*sBox3", "sBox4", "sBox5", "|", "sFlat", "*sDetail", "sUp", "|"];
const STATUS_RIGHT = ["rPoly", "*rRect", "^", "*rNear", "*rAngle", "rOrtho", "rGrid", "rMove", "rGear"];
const COMMANDS = ["*cAxis", "cPaint1", "cPaint2", "cPaint3", "*cFrame", "|", "cSlab", "*cBeam", "*cCol", "*cWall", "*cDots", "*cSocket", "|", "cBox1", "cBox2", "cBox3"];

@customElement("app-root")
class AppRoot extends LitElement {
  static styles = [buttonReset, css`
    :host { display: flex; flex-direction: column; min-height: 100vh; position: relative; overflow: hidden; background: #f0f0f0; font: 12px/16px "Open Sans", "Noto Sans CJK SC", sans-serif; }
    .shell { flex: 1; display: flex; min-height: 0; }
    .gutter { width: 7px; flex: none; background: linear-gradient(#000 26px, #e7e7e7 26px 60px, #f8f8f8 60px); border-bottom: 4px solid #cfcfcf; }
    .app { flex: 1; display: flex; flex-direction: column; min-width: 0; }
    .title { display: flex; align-items: center; height: 26px; background: #303539; color: #a0a3a5; padding: 0 8px 0 7px; }
    .quick { display: flex; align-items: center; gap: 4px; flex: 6 1 0; }
    .quick cad-icon { width: 14px; height: 14px; }
    .quick button { width: 16px; height: 16px; }
    .quick .logo cad-icon { width: 16px; height: 16px; }
    .quick select { appearance: none; width: 110px; height: 20px; margin-left: 8px; padding: 0 5px; border: 1px solid #6a6d70; border-radius: 0; color: #d0d2d3; font: inherit;
      background: linear-gradient(#8a8d90, #8a8d90) 99px 8px / 5px 1px no-repeat, linear-gradient(#8a8d90, #8a8d90) 100px 9px / 3px 1px no-repeat, linear-gradient(#8a8d90, #8a8d90) 101px 10px / 1px 1px no-repeat, #232527; }
    .quick .more cad-icon { width: 8px; height: 8px; }
    .quick .more { width: 8px; }
    .doc { flex: none; white-space: pre; }
    .wins { flex: 5 1 0; display: flex; justify-content: flex-end; gap: 12px; color: #bfc1c2; }
    .wins button { width: 16px; height: 16px; }
    .wins cad-icon { width: 10px; height: 10px; }
    .work { flex: 1; display: grid; grid-template-columns: 375px 1px minmax(0, 1fr); min-height: 0; }
    .center { grid-column: 3; display: flex; flex-direction: column; min-height: 0; }
    plan-view { flex: 1; }
    .cmdrow { display: flex; height: 31px; background: #e6e6e6; border-top: 1px solid #d0d0d0; }
    .cmd, .kit { display: flex; align-items: center; background: #fff; border-radius: 4px; height: 30px; }
    .cmd { width: 647px; padding: 0 6px 0 4px; gap: 8px; }
    .grip { width: 0; height: 14px; border-left: 2px dotted #a5a5a5; }
    .cmd input { flex: 1; border: 0; outline: 0; font: inherit; padding: 0; padding-left: 4px; background: none; }
    .cmd input::placeholder { color: #777; opacity: 1; }
    .kit { gap: 2px; padding: 0 4px; }
    .kit .grip { margin-right: 4px; }
    .kit .btn { width: 24px; height: 24px; }
    .kit .btn cad-icon { width: 18px; height: 18px; }
    .kit .vr { margin: 0 2px; }
    .btn.on { background: #c2ddd7; box-shadow: inset 0 0 0 1px #35907f; }
    .vr { width: 1px; height: 16px; background: #c9c9c9; flex: none; }
    .cmd .vr { height: 24px; }
    .status { display: flex; align-items: center; height: 28px; border-top: 1px solid #c8c8c8; border-bottom: 1px solid #b4b4b4; background: #f1f1f1; padding: 0 8px 0 6px; }
    .run { display: flex; align-items: center; gap: 6px; flex: 20 1 0; }
    .run.end { justify-content: flex-end; flex-grow: 17; }
    .run .btn { width: 20px; height: 20px; }
    .run .btn cad-icon { width: 16px; height: 16px; }
    .run .pop { width: 4px; }
    .pop cad-icon { width: 14px; height: 14px; }
    .zoom { display: flex; align-items: center; gap: 9px; color: #999; padding-left: 4px; font-size: 18px; }
    .zoom input { appearance: none; width: 60px; height: 16px; margin: 0; background: linear-gradient(#b5b5b5, #b5b5b5) 0 7px / 100% 1px no-repeat; }
    .zoom input::-webkit-slider-thumb { appearance: none; width: 5px; height: 14px; background: #eee; border: 1px solid #999; }
    .coords { font-size: 12px; color: #333; white-space: pre; }
    .desk { height: 8px; background: linear-gradient(90deg, #d6d6d6 0 45%, #dfd3d1 50%, #cfe0e8 54% 63%, #e6d3d2 68% 74%, #d6d6d6 80%); }
  `];
  private tool(list: string[]) {
    return list.map((n) => {
      if (n === "|") return html`<i class="vr"></i>`;
      if (n === "^") return html`<button class="pop" aria-label="展开捕捉"><cad-icon name="cUp"></cad-icon></button>`;
      const on = n.startsWith("*");
      const name = on ? n.slice(1) : n;
      return html`<button class=${classMap({ btn: true, on })} aria-label=${name}><cad-icon name=${name}></cad-icon></button>`;
    });
  }
  render() {
    return html`
      <div class="shell">
        <div class="gutter"></div>
        <div class="app">
          <header class="title">
            <div class="quick">
              <button class="logo" aria-label="主菜单"><cad-icon name="logo"></cad-icon></button>
              ${QUICK.map((n) => html`<button aria-label=${n}><cad-icon name=${n}></cad-icon></button>`)}
              <select aria-label="版本"><option>PC全功能版</option></select>
              <button class="more" aria-label="更多"><cad-icon name="more"></cad-icon></button>
            </div>
            <span class="doc">P3D  -[  F:\\0-lhy\\飘窗配筋\\版本5\\All_P_113581_Arch113583_Mep113584_SPP113587\\test.p3d  ]  -  [[三维-标准层1]   [视窗0]   ]</span>
            <div class="wins">
              <button aria-label="最小化"><cad-icon name="min"></cad-icon></button>
              <button aria-label="还原"><cad-icon name="restore"></cad-icon></button>
              <button aria-label="关闭"><cad-icon name="close"></cad-icon></button>
            </div>
          </header>
          <cad-ribbon></cad-ribbon>
          <div class="work">
            <split-dialog></split-dialog>
            <div class="center">
              <plan-view></plan-view>
              <div class="cmdrow">
                <div class="cmd"><i class="grip"></i><input aria-label="命令" placeholder="在此输入命令" /><i class="vr"></i><button aria-label="展开"><cad-icon name="cUp"></cad-icon></button></div>
                <div class="kit"><i class="grip"></i>${this.tool(COMMANDS)}</div>
              </div>
            </div>
          </div>
          <footer class="status">
            <div class="run">${this.tool(STATUS_LEFT)}
              <div class="zoom"><span>−</span><input type="range" aria-label="缩放" value="50" /><span>+</span></div></div>
            <span class="coords">-768847.47 , 316813.51 , 0.00</span>
            <div class="run end">${this.tool(STATUS_RIGHT)}</div>
          </footer>
        </div>
      </div>
      <div class="desk"></div>
      <markup-layer></markup-layer>`;
  }
}
